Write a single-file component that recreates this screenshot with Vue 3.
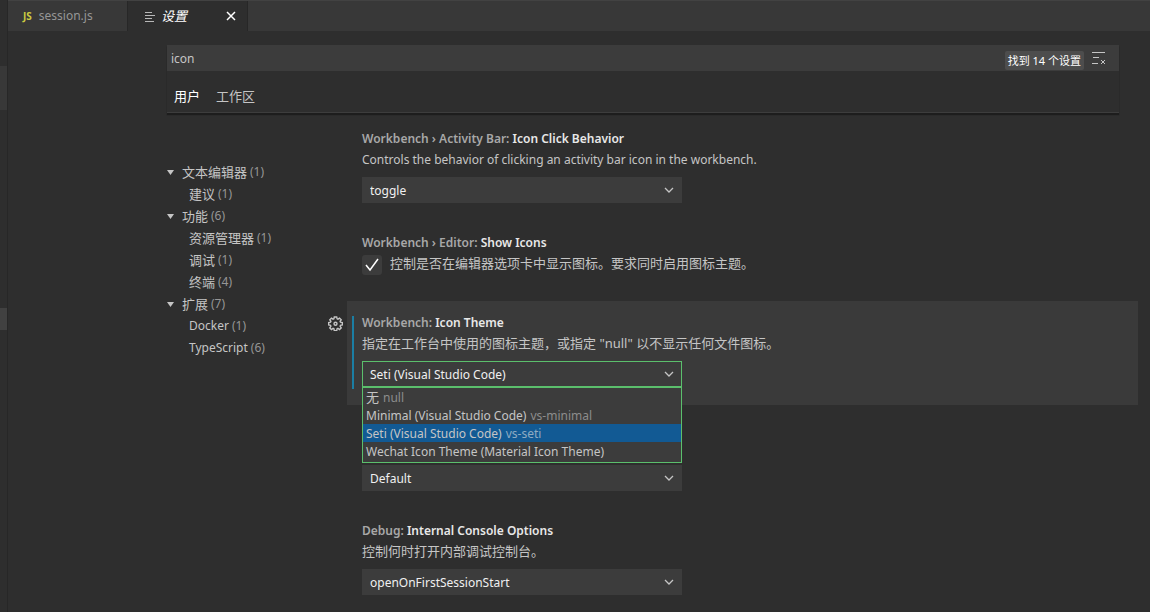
<script setup>
import { ref } from 'vue'

const query = ref('icon')
const showIcons = ref(true)

const toc = [
  { label: '文本编辑器', count: 1, group: true },
  { label: '建议', count: 1 },
  { label: '功能', count: 6, group: true },
  { label: '资源管理器', count: 1 },
  { label: '调试', count: 1 },
  { label: '终端', count: 4 },
  { label: '扩展', count: 7, group: true },
  { label: 'Docker', count: 1, latin: true },
  { label: 'TypeScript', count: 6, latin: true },
]

const settings = ref([
  {
    id: 'click-behavior',
    category: 'Workbench › Activity Bar:',
    name: 'Icon Click Behavior',
    description: 'Controls the behavior of clicking an activity bar icon in the workbench.',
    latin: true,
    value: 'toggle',
  },
  {
    id: 'show-icons',
    type: 'boolean',
    category: 'Workbench › Editor:',
    name: 'Show Icons',
    description: '控制是否在编辑器选项卡中显示图标。要求同时启用图标主题。',
  },
  {
    id: 'icon-theme',
    category: 'Workbench:',
    name: 'Icon Theme',
    description: '指定在工作台中使用的图标主题，或指定 "null" 以不显示任何文件图标。',
    value: 'Seti (Visual Studio Code)',
    open: true,
  },
  {
    id: 'default-mode',
    value: 'Default',
  },
  {
    id: 'console-options',
    category: 'Debug:',
    name: 'Internal Console Options',
    description: '控制何时打开内部调试控制台。',
    value: 'openOnFirstSessionStart',
  },
])

const themes = [
  { label: '无', detail: 'null', cjk: true },
  { label: 'Minimal (Visual Studio Code)', detail: 'vs-minimal' },
  { label: 'Seti (Visual Studio Code)', detail: 'vs-seti' },
  { label: 'Wechat Icon Theme (Material Icon Theme)', detail: '' },
]

const selectedTheme = ref('Seti (Visual Studio Code)')
</script>

<template>
  <div class="workbench">
    <aside class="side-edge">
      <span class="edge-block tall"></span>
      <span class="edge-block"></span>
    </aside>

    <div class="editor">
      <nav class="tab-bar">
        <button type="button" class="tab">
          <span class="js-icon">JS</span>
          <span>session.js</span>
        </button>
        <div class="tab active">
          <svg class="list-icon" viewBox="0 0 10 11" aria-hidden="true">
            <path d="M0 1.500h7M0 4.500h10M0 7.500h7M0 10.500h9" />
          </svg>
          <span class="tab-title">设置</span>
          <button type="button" class="close" aria-label="关闭">
            <svg viewBox="0 0 10 10" aria-hidden="true">
              <path d="M1 1l8 8M9 1L1 9" />
            </svg>
          </button>
        </div>
      </nav>

      <main class="settings-editor">
        <header class="settings-header">
          <div class="search">
            <input v-model="query" class="search-input" type="text" aria-label="搜索设置" />
            <span class="result-count">找到 14 个设置</span>
            <button type="button" class="clear" aria-label="清除">
              <svg viewBox="0 0 14 14" aria-hidden="true">
                <path d="M0 1.500h13M1 6.500h6M0 12.500h6" />
                <path d="M9 9l4 4M13 9l-4 4" />
              </svg>
            </button>
          </div>
          <div class="scopes">
            <button type="button" class="scope selected">用户</button>
            <button type="button" class="scope">工作区</button>
          </div>
        </header>

        <div class="settings-body">
          <ul class="toc">
            <li v-for="entry in toc" :key="entry.label" class="toc-row" :class="{ child: !entry.group }">
              <svg v-if="entry.group" class="twistie" viewBox="0 0 7 5" aria-hidden="true">
                <path d="M0 0h7L3.5 5z" />
              </svg>
              <span :class="{ latin: entry.latin }">{{ entry.label }}</span>
              <span class="count">({{ entry.count }})</span>
            </li>
          </ul>

          <div class="setting-list">
            <section
              v-for="setting in settings"
              :key="setting.id"
              class="setting"
              :class="{ focused: setting.open }"
            >
              <button v-if="setting.open" type="button" class="gear" aria-label="更多操作">
                <svg viewBox="0 0 16 16" aria-hidden="true">
                  <path
                    d="M6.7 1h2.600l.4 2 .9.400 1.700-1.200 1.800 1.800-1.200 1.700.4.900 2 .4v2.600l-2 .4-.4.900 1.200 1.700-1.800 1.800-1.700-1.200-.9.400-.4 2H6.700l-.4-2-.9-.4-1.700 1.200-1.800-1.800 1.200-1.700-.4-.9-2-.4V7l2-.4.400-.9L1.900 4l1.800-1.800 1.700 1.200.9-.4z"
                  />
                  <circle cx="8" cy="8.2" r="1.6" />
                </svg>
              </button>

              <label class="setting-title" :for="setting.id">
                <span class="category">{{ setting.category }}</span>
                {{ setting.name }}
              </label>

              <div v-if="setting.type === 'boolean'" class="check-row">
                <span class="check-box">
                  <input :id="setting.id" v-model="showIcons" type="checkbox" />
                  <svg v-if="showIcons" viewBox="0 0 20 20" aria-hidden="true">
                    <path d="M4 10l4 5 8-11" />
                  </svg>
                </span>
                <span>{{ setting.description }}</span>
              </div>
              <template v-else>
                <p class="description" :class="{ latin: setting.latin }">{{ setting.description }}</p>
                <div class="select-box" :class="{ open: setting.open }">
                  <select :id="setting.id" v-model="setting.value" :aria-label="setting.name || setting.value">
                    <option>{{ setting.value }}</option>
                  </select>
                  <svg class="chevron" viewBox="0 0 10 6" aria-hidden="true">
                    <path d="M1 1l4 4 4-4" />
                  </svg>
                  <ul v-if="setting.open" class="dropdown" role="listbox">
                    <li
                      v-for="theme in themes"
                      :key="theme.label"
                      class="option"
                      :class="{ selected: theme.label === selectedTheme, cjk: theme.cjk }"
                      role="option"
                      :aria-selected="theme.label === selectedTheme"
                      @click="selectedTheme = theme.label"
                    >
                      <span class="option-label">{{ theme.label }}</span>
                      <span class="detail">{{ theme.detail }}</span>
                    </li>
                  </ul>
                </div>
              </template>
            </section>
          </div>
        </div>
      </main>
    </div>
  </div>
</template>

<style>
body {
  background: #2e2e2e;
}
</style>

<style scoped>
* {
  box-sizing: border-box;
}

.workbench {
  display: flex;
  height: 100vh;
  overflow: hidden;
  color: #c5c5c5;
  background: #2e2e2e;
  font-family: 'Noto Sans', 'Noto Sans CJK SC', sans-serif;
  font-size: 13px;
  line-height: 20px;
}

button,
input,
select {
  margin: 0;
  border: 0;
  padding: 0;
  color: inherit;
  background: none;
  font: inherit;
  outline: none;
}

button {
  cursor: pointer;
}

ul {
  margin: 0;
  padding: 0;
  list-style: none;
}

svg {
  display: block;
  fill: none;
  stroke: currentColor;
}

.latin {
  font-size: 12px;
}

.side-edge {
  display: flex;
  flex: none;
  flex-direction: column;
  gap: 198px;
  width: 8px;
  padding-top: 66px;
  border-right: 1px solid #272727;
}

.edge-block {
  height: 22px;
  background: #414141;
}

.edge-block.tall {
  height: 44px;
  background: #383838;
}

.editor {
  flex: 1;
  min-width: 0;
}

.tab-bar {
  display: flex;
  height: 31px;
  border-top: 1px solid #424242;
  background: #383838;
}

.tab {
  display: flex;
  align-items: center;
  width: 120px;
  padding: 0 11px 0 15px;
  border-right: 1px solid #272727;
  color: #969696;
  font-size: 12px;
  line-height: 22px;
}

.js-icon {
  margin-right: 7px;
  color: #cbcb41;
  font-size: 10px;
  font-weight: 700;
}

.tab.active {
  padding-left: 17px;
  color: #ffffff;
  background: #2e2e2e;
}

.list-icon {
  width: 10px;
  height: 11px;
  margin-right: 6px;
  color: #b8b8b8;
}

.tab-title {
  font-size: 13px;
  font-style: italic;
}

.close {
  margin-left: auto;
}

.close svg {
  width: 10px;
  height: 10px;
  stroke-width: 1.5;
}

.settings-editor {
  padding: 14px 12px 0 159px;
}

.settings-header {
  margin-right: 19px;
  border-bottom: 1px solid #3d3d3d;
  box-shadow: 0 2px 1px #1d1d1d;
}

.search {
  display: flex;
  align-items: center;
  height: 26px;
  padding-right: 13px;
  background: #3c3c3c;
}

.search-input {
  flex: 1;
  min-width: 0;
  padding: 2px 4px 0;
  font-size: 12px;
}

.result-count {
  margin: 4px 8px 0 0;
  border-radius: 2px;
  padding: 0 3px;
  color: #ffffff;
  background: #4d4d4d;
  font-size: 11px;
  line-height: 19px;
}

.clear svg {
  width: 14px;
  height: 14px;
}

.scopes {
  display: flex;
  gap: 16px;
  height: 41px;
  padding: 0 7px;
}

.scope {
  padding-top: 8px;
}

.scope.selected {
  color: #ffffff;
}

.settings-body {
  display: flex;
  padding-top: 4px;
}

.toc {
  flex: none;
  width: 180px;
  padding-top: 44px;
}

.toc-row {
  display: flex;
  align-items: center;
  height: 22px;
}

.toc-row.child {
  padding-left: 22px;
}

.twistie {
  width: 7px;
  height: 5px;
  margin-right: 8px;
  fill: #c5c5c5;
  stroke: none;
}

.toc-row .latin,
.count {
  line-height: 22px;
}

.count {
  margin-left: 3px;
  color: #969696;
  font-size: 12px;
}

.setting-list {
  flex: 1;
  min-width: 0;
}

.setting {
  position: relative;
  padding: 12px 15px 18px;
}

.setting.focused {
  z-index: 1;
  background: #3a3a3a;
}

.setting.focused::before {
  content: '';
  position: absolute;
  top: 15px;
  bottom: 16px;
  left: 5px;
  width: 2px;
  background: #1b7ea3;
}

.gear {
  position: absolute;
  top: 15px;
  left: -19px;
}

.gear svg {
  width: 15px;
  height: 15px;
  stroke-width: 1.5;
}

.setting-title {
  display: block;
  height: 20px;
  color: #e8e8e8;
  font-size: 12px;
  font-weight: 600;
}

.category {
  color: #a8a8a8;
}

.description {
  height: 20px;
  margin: 0 0 8px;
}

.description.latin {
  line-height: 22px;
}

.check-row {
  display: flex;
  align-items: flex-start;
  gap: 8px;
  margin-bottom: 8px;
}

.check-box {
  display: grid;
  width: 20px;
  height: 22px;
  padding-top: 2px;
}

.check-box > * {
  grid-area: 1 / 1;
}

.check-box input {
  border-radius: 3px;
  appearance: none;
  background: #3c3c3c;
}

.check-box svg {
  color: #ffffff;
  stroke-width: 1.5;
  pointer-events: none;
}

.select-box {
  position: relative;
  display: grid;
  align-items: center;
  width: 320px;
  height: 26px;
  color: #f0f0f0;
  background: #3c3c3c;
}

.select-box > select,
.select-box > .chevron {
  grid-area: 1 / 1;
}

.select-box select {
  width: 100%;
  height: 26px;
  border: 1px solid transparent;
  padding: 2px 7px 0;
  appearance: none;
  font-size: 12px;
}

.select-box.open select {
  border-color: #5bbf6c;
}

.chevron {
  justify-self: end;
  width: 10px;
  height: 6px;
  margin-right: 8px;
  color: #c5c5c5;
  stroke-width: 1.3;
  pointer-events: none;
}

.dropdown {
  position: absolute;
  top: 26px;
  left: 0;
  width: 100%;
  border: 1px solid #5bbf6c;
  padding-bottom: 2px;
  color: #c5c5c5;
  background: #3c3c3c;
}

.option {
  display: flex;
  gap: 4px;
  height: 18px;
  padding: 0 3px;
  font-size: 12px;
  line-height: 20px;
}

.option.cjk .option-label {
  font-size: 13px;
  line-height: 18px;
}

.option.selected {
  background: #125a94;
}

.detail {
  color: #8c8c8c;
}

.option.selected .detail {
  color: #8fabc2;
}
</style>
